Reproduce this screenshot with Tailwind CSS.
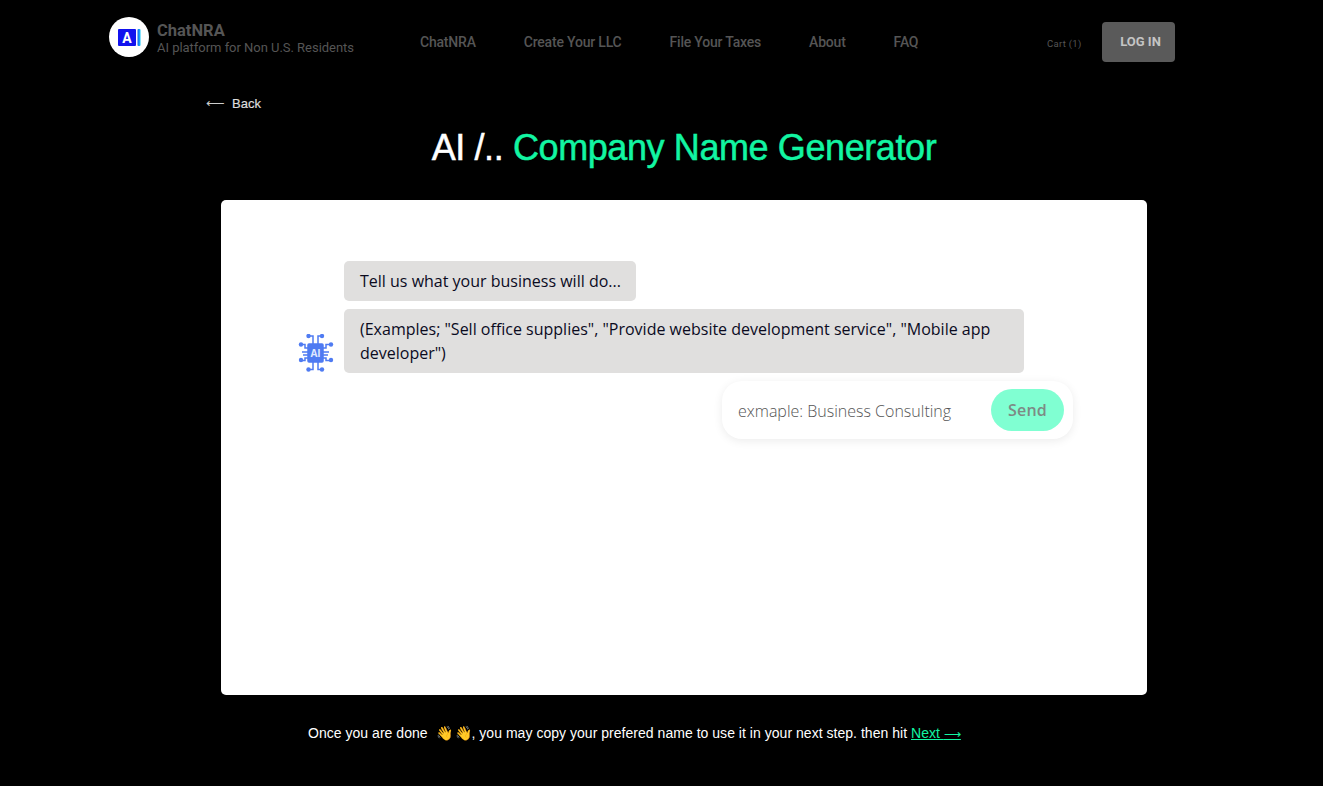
<!DOCTYPE html>
<html lang="en">
<head>
    <meta charset="UTF-8">
    <meta name="viewport" content="width=device-width, initial-scale=1.0">
    <title>ChatNRA - Company Name Generator</title>
    <script src="https://cdn.jsdelivr.net/npm/@tailwindcss/browser@4"></script>
</head>
<body class="bg-black h-[786px] overflow-hidden font-['Liberation_Sans',sans-serif]">

    <!-- Nav -->
    <header class="h-[84px] pl-[109px] flex items-center text-[#555] font-['Roboto',sans-serif]">
        <div class="w-[40px] h-[40px] rounded-full bg-white flex items-center justify-center mt-[-10px]">
            <svg width="23" height="17" viewBox="0 0 23 17">
                <defs>
                    <linearGradient id="logobar" x1="0" x2="1" y1="0" y2="0">
                        <stop offset="0" stop-color="#1a5cf0"/>
                        <stop offset="1" stop-color="#12c8f8"/>
                    </linearGradient>
                </defs>
                <rect x="0" y="0" width="18" height="17" rx="1" fill="#1212ee"/>
                <rect x="19.5" y="0" width="3" height="17" rx="1" fill="url(#logobar)"/>
                <text x="9" y="14" text-anchor="middle" font-family="Roboto" font-weight="700" font-size="14" fill="#fff">A</text>
            </svg>
        </div>
        <div class="ml-[8px] mt-[-7px] w-[263px]">
            <div class="text-[16.5px] leading-[18px] font-bold">ChatNRA</div>
            <div class="text-[13px] leading-[15px] tracking-[-0.03px]">AI platform for Non U.S. Residents</div>
        </div>
        <nav class="flex gap-[48px] text-[14px] tracking-[-0.2px] font-medium w-[627px]">
            <a>ChatNRA</a>
            <a>Create Your LLC</a>
            <a>File Your Taxes</a>
            <a>About</a>
            <a>FAQ</a>
        </nav>
        <a class="text-[9.5px] w-[55px] mt-[4px] tracking-[0.3px]">Cart (1)</a>
        <button class="w-[73px] h-[40px] rounded-[4px] bg-[#5a5a5a] text-[#c4c4c4] text-[13px] font-bold pl-[4px]">LOG IN</button>
    </header>

    <!-- Back + title -->
    <div class="pl-[206px] h-[38px] pt-[11px] text-[13px] leading-[18px] text-[#ddd] flex">
        <span class="w-[26px] text-[#ccc]">⟵</span><span class="[-webkit-text-stroke:0.2px]">Back</span>
    </div>
    <h1 class="w-[1368px] text-center text-[36px] leading-[52px] text-white tracking-[-0.4px] h-[78px] [-webkit-text-stroke:0.5px]">AI /.. <span class="text-[#12f5a2]">Company Name Generator</span></h1>

    <!-- Chat card -->
    <main class="ml-[221px] w-[926px] h-[495px] bg-white rounded-[5px] pt-[61px] pl-[77px] font-['Open_Sans',sans-serif]">
        <div class="flex items-end">
            <svg class="w-[36px] h-[40px] mb-[-1px]" viewBox="0 0 36 40" fill="none" stroke="#4f7bf2" stroke-width="1.5">
                <rect x="10" y="10" width="15" height="18" rx="1" fill="#4f7bf2"/>
                <path d="M15 10V2H10.500M20 10V2h4M15 28v7.500h-4.500M20 28v7.500h4M10 14H7v-3.500H3M10 24h-3v2.500H3M25 14h3v-3.500h5M25 24h3v2.500h5M10 18H4M25 18h6M10 21H5M25 21h5"/>
                <g fill="#4f7bf2" stroke="none">
                    <circle cx="10.500" cy="2" r="2.200"/><circle cx="24" cy="2" r="2.200"/><circle cx="10.500" cy="35.500" r="2.200"/><circle cx="24" cy="35.500" r="2.200"/>
                    <circle cx="3" cy="10.500" r="2.200"/><circle cx="33" cy="10.500" r="2.200"/><circle cx="3" cy="26" r="2.200"/><circle cx="33" cy="26" r="2.200"/>
                </g>
                <text x="17.500" y="23" text-anchor="middle" font-family="Open Sans" font-weight="700" font-size="10" fill="#dfe7ff" stroke="none">AI</text>
            </svg>
            <div class="ml-[10px] flex flex-col items-start gap-[8px] text-[16px] leading-[24px] text-[#0b0b1e]">
                <div class="bg-[#e0dfde] rounded-[5px] px-[16px] py-[8px] w-[292px] whitespace-nowrap">Tell us what your business will do...</div>
                <div class="bg-[#e0dfde] rounded-[5px] px-[16px] py-[8px] w-[680px]">(Examples; "Sell office supplies", "Provide website development service", "Mobile app developer")</div>
            </div>
        </div>
        <div class="ml-[424px] mt-[8px] w-[351px] h-[58px] rounded-[20px] bg-white shadow-[0_2px_10px_rgba(0,0,0,0.08)] flex items-center pl-[16px] pr-[9px] justify-between">
            <span class="text-[16px] font-light text-[#555] pt-[1px]">exmaple: Business Consulting</span>
            <button class="w-[73px] h-[42px] rounded-[21px] bg-[#80ffd2] text-[#7d8a85] text-[16px] tracking-[0.2px] font-semibold">Send</button>
        </div>
    </main>

    <!-- Footer hint -->
    <p class="pl-[308px] mt-[29px] text-[14px] leading-[18px] text-white tracking-[0.03px]">Once you are done <span class="ml-[4px]">👋</span> <span class="ml-[-1px] mr-[-1px]">👋</span>, you may copy your prefered name to use it in your next step. then hit <a class="text-[#12f5a2] underline">Next <span class="text-[11.5px]">⟶</span></a></p>
</body>
</html>
